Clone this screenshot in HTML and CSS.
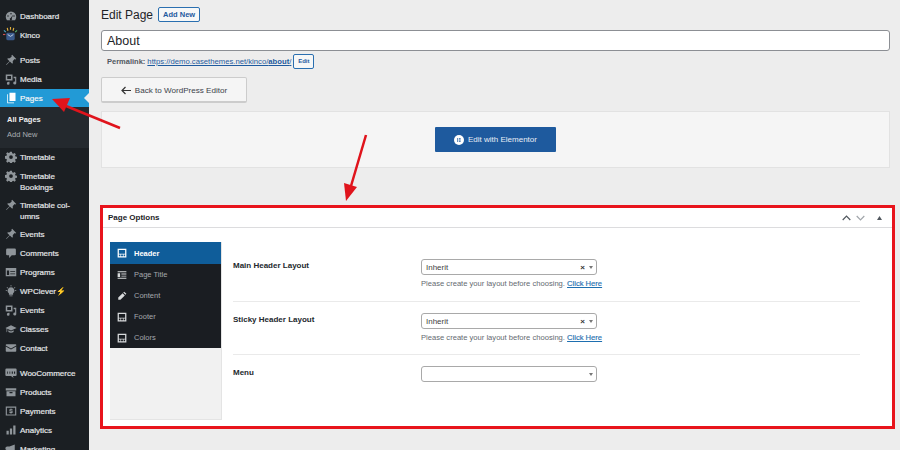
FILE: index.html
```html
<!DOCTYPE html>
<html lang="en">

<head>
    <meta charset="UTF-8">
    <title>Edit Page</title>
    <link rel="stylesheet" href="styles.css">
</head>

<body>
    <svg class="defs" width="0" height="0">
        <symbol id="i-dash" viewBox="0 0 16 16"><path d="M8 2a7 7 0 0 0-7 7c0 1.800.6 3.300 1.600 4.500h10.800A7 7 0 0 0 15 9a7 7 0 0 0-7-7zM8 4a1 1 0 1 1 0 2 1 1 0 0 1 0-2zM4 7a1 1 0 1 1 0 2 1 1 0 0 1 0-2zm8 0a1 1 0 1 1 0 2 1 1 0 0 1 0-2zM11 6l-2 5a1.500 1.500 0 1 1-1.500-.5z"/></symbol>
        <symbol id="i-pin" viewBox="0 0 16 16"><path d="M9.500 1l5.500 5.500-1.200.8-1-.5-2.600 2.700c.5 1.300.3 2.500-.5 3.500L6.500 10 2 14.500l-.5-.5L6 9.500 2.800 6.300c1-.8 2.200-1 3.500-.5L9 3.200l-.5-1z"/></symbol>
        <symbol id="i-media" viewBox="0 0 16 16"><path fill-rule="evenodd" d="M1 2h9v8H1zm2 2v4h5V4zM11.500 5H15v8.500a2 2 0 1 1-1.500-2V7h-2zM6 11.500v1.700A1.800 1.800 0 1 1 4.500 12v-.5z"/></symbol>
        <symbol id="i-pages" viewBox="0 0 16 16"><path d="M6 1h8v11H6zM4 3v11h8v1H3V3z"/></symbol>
        <symbol id="i-gear" viewBox="0 0 16 16"><path fill-rule="evenodd" d="M6.800 1h2.400l.4 2 1.500.6 1.700-1.100 1.700 1.700-1.100 1.700.6 1.500 2 .4v2.400l-2 .4-.6 1.500 1.100 1.700-1.700 1.700-1.700-1.100-1.500.6-.4 2H6.800l-.4-2-1.500-.6-1.700 1.100-1.700-1.700 1.100-1.700-.6-1.500-2-.4V6.800l2-.4.6-1.500-1.100-1.700 1.700-1.700 1.700 1.100 1.500-.6zM8 5.500a2.500 2.500 0 1 0 0 5 2.500 2.500 0 0 0 0-5z"/></symbol>
        <symbol id="i-comment" viewBox="0 0 16 16"><path d="M3 2h10a1.500 1.500 0 0 1 1.500 1.500v6A1.500 1.500 0 0 1 13 11H9l-3.500 3.500V11H3a1.500 1.500 0 0 1-1.500-1.500v-6A1.500 1.500 0 0 1 3 2z"/></symbol>
        <symbol id="i-programs" viewBox="0 0 16 16"><path fill-rule="evenodd" d="M1 2.500h14v11H1zM2.500 6v6h3V6zm4.500 1v1h6.500V7zm0 3v1h6.500v-1z"/></symbol>
        <symbol id="i-bulb" viewBox="0 0 16 16"><path d="M8 3a4.500 4.500 0 0 1 2.800 8v2H5.200v-2A4.500 4.500 0 0 1 8 3zM6 14h4v1H6zM7.500 0h1v2h-1zM1 7h2v1H1zm12 0h2v1h-2zM2.800 2.500l1.500 1.500-.7.700L2.100 3.200zm10.400 0l.7.700-1.500 1.500-.7-.7z"/></symbol>
        <symbol id="i-cap" viewBox="0 0 16 16"><path d="M8 3l7.500 3.500L8 10 3 7.700V11l-1 1.500V7.200L.5 6.500zM4.500 9.500L8 11.200l3.500-1.700V12c-2 1.300-5 1.300-7 0z"/></symbol>
        <symbol id="i-mail" viewBox="0 0 16 16"><path d="M2 3h12a1 1 0 0 1 1 1v.5L8 8.500 1 4.500V4a1 1 0 0 1 1-1zM1 6l7 4 7-4v6a1 1 0 0 1-1 1H2a1 1 0 0 1-1-1z"/></symbol>
        <symbol id="i-woo" viewBox="0 0 16 16"><path fill-rule="evenodd" d="M2 2h12a1.500 1.500 0 0 1 1.500 1.500v7A1.500 1.500 0 0 1 14 12h-3.500l1 2.500-3.500-2.500H2A1.500 1.500 0 0 1 .5 10.500v-7A1.500 1.500 0 0 1 2 2zm1 4v3h1V6zm3 0v3h1V6zm3 0v3h1.500V6zm3 0v3h1.500V6z"/></symbol>
        <symbol id="i-box" viewBox="0 0 16 16"><path fill-rule="evenodd" d="M1 3h14v3H1zM2 7h12v6.500H2zm4 1v1.500h4V8z"/></symbol>
        <symbol id="i-pay" viewBox="0 0 16 16"><path fill-rule="evenodd" d="M1 2h14v12H1zm1.500 1.500v9h11v-9zM7.400 4.500h1.200v1h1.500v1.200H7.300v.7h2.800v3.100H8.600v1H7.400v-1H5.900V9.300h2.800v-.7H5.900V5.500h1.500z"/></symbol>
        <symbol id="i-chart" viewBox="0 0 16 16"><path d="M2 9h3v5H2zm4.500-3h3v8h-3zM11 2h3v12h-3z"/></symbol>
        <symbol id="i-mega" viewBox="0 0 16 16"><path d="M13 2v10L6 9.500H3a2 2 0 0 1 0-5h3zM4 10.500h2l1 3.500H5z"/></symbol>
        <symbol id="i-layout" viewBox="0 0 16 16"><path fill-rule="evenodd" d="M1 1h14v14H1zM3 3v6h10V3zm0 7.500v2.500h2.500v-2.500zm3.500 0v2.500h3v-2.500zm4 0v2.500H13v-2.500z"/></symbol>
        <symbol id="i-title" viewBox="0 0 16 16"><path d="M1 2h14v1.500H1zM7 5.500h8V7H7zm0 3.500h8v1.500H7zM1 12.500h14V14H1zM1 5h4v6H1z"/></symbol>
        <symbol id="i-pencil" viewBox="0 0 16 16"><path d="M11.500 1l3.500 3.500-1.500 1.500L10 2.500zM9 3.500L12.500 7l-7 7H2v-3.500z"/></symbol>
    </svg>

    <div class="page">
        <nav class="sidebar">
            <a class="nav-item"><svg class="nav-icon"><use href="#i-dash"/></svg>Dashboard</a>
            <a class="nav-item">
                <svg class="nav-icon kinco-icon" viewBox="0 0 16 16">
                    <rect x="3.500" y="6" width="9" height="8" rx="1.500" fill="#3a5a8c"/>
                    <path d="M5 8l3 2 3-2" stroke="#c8d4e4" fill="none"/>
                    <path d="M8 0v3M4.500 1l.8 3M11.500 1l-.8 3" stroke="#e0b040" stroke-width="1.200"/>
                    <path d="M1 3.500l2 2" stroke="#4aa8c8" stroke-width="1.200"/>
                    <path d="M15 3.500l-2 2" stroke="#58b070" stroke-width="1.200"/>
                    <path d="M0 8h2.500" stroke="#d05050" stroke-width="1.200"/>
                </svg>Kinco
            </a>
            <div class="nav-gap"></div>
            <a class="nav-item"><svg class="nav-icon"><use href="#i-pin"/></svg>Posts</a>
            <a class="nav-item"><svg class="nav-icon"><use href="#i-media"/></svg>Media</a>
            <a class="nav-item active"><svg class="nav-icon"><use href="#i-pages"/></svg>Pages</a>
            <div class="submenu">
                <a class="sub-item current">All Pages</a>
                <a class="sub-item">Add New</a>
            </div>
            <a class="nav-item"><svg class="nav-icon"><use href="#i-gear"/></svg>Timetable</a>
            <a class="nav-item"><svg class="nav-icon"><use href="#i-gear"/></svg>Timetable Bookings</a>
            <a class="nav-item"><svg class="nav-icon"><use href="#i-pin"/></svg>Timetable col-umns</a>
            <a class="nav-item"><svg class="nav-icon"><use href="#i-pin"/></svg>Events</a>
            <a class="nav-item"><svg class="nav-icon"><use href="#i-comment"/></svg>Comments</a>
            <a class="nav-item"><svg class="nav-icon"><use href="#i-programs"/></svg>Programs</a>
            <a class="nav-item"><svg class="nav-icon"><use href="#i-bulb"/></svg>WPClever<span class="bolt">⚡</span></a>
            <a class="nav-item"><svg class="nav-icon"><use href="#i-media"/></svg>Events</a>
            <a class="nav-item"><svg class="nav-icon"><use href="#i-cap"/></svg>Classes</a>
            <a class="nav-item"><svg class="nav-icon"><use href="#i-mail"/></svg>Contact</a>
            <div class="nav-gap"></div>
            <a class="nav-item"><svg class="nav-icon"><use href="#i-woo"/></svg>WooCommerce</a>
            <a class="nav-item"><svg class="nav-icon"><use href="#i-box"/></svg>Products</a>
            <a class="nav-item"><svg class="nav-icon"><use href="#i-pay"/></svg>Payments</a>
            <a class="nav-item"><svg class="nav-icon"><use href="#i-chart"/></svg>Analytics</a>
            <a class="nav-item"><svg class="nav-icon"><use href="#i-mega"/></svg>Marketing</a>
        </nav>

        <main class="content">
            <div class="heading">
                <h1>Edit Page</h1>
                <a class="add-new">Add New</a>
            </div>
            <div class="title-input">About</div>
            <div class="permalink">
                <b>Permalink:</b>
                <a class="perma-link">https://demo.casethemes.net/kinco/<b>about</b>/</a>
                <span class="perma-edit">Edit</span>
            </div>
            <a class="back-btn"><span class="back-arrow">
                <svg width="10" height="9" viewBox="0 0 10 9"><path d="M4.500 1L1 4.500 4.500 8M1 4.500h9" fill="none" stroke="#333" stroke-width="1.200"/></svg>
            </span>Back to WordPress Editor</a>

            <div class="elementor-box">
                <a class="elementor-btn">
                    <svg width="10" height="10" viewBox="0 0 12 12"><circle cx="6" cy="6" r="6" fill="#fff"/><path d="M4 3.500h1v5H4zM6 3.500h2v1H6zm0 2h2v1H6zm0 2h2v1H6z" fill="#1e5a9e"/></svg>
                    Edit with Elementor
                </a>
            </div>

            <section class="metabox">
                <header class="metabox-head">
                    <h2>Page Options</h2>
                    <div class="metabox-tools">
                        <svg width="9" height="6" viewBox="0 0 9 6"><path d="M.7 5l3.800-3.800L8.300 5" fill="none" stroke="#50575e" stroke-width="1.200"/></svg>
                        <svg width="9" height="6" viewBox="0 0 9 6"><path d="M.7 1l3.800 3.800L8.300 1" fill="none" stroke="#a0a5aa" stroke-width="1.200"/></svg>
                        <svg class="tool-caret" width="5" height="4" viewBox="0 0 5 4"><path d="M2.500 0L5 4H0z" fill="#50575e"/></svg>
                    </div>
                </header>
                <div class="options">
                    <div class="tabs">
                        <ul class="tab-list">
                            <li class="tab on"><svg class="tab-icon"><use href="#i-layout"/></svg>Header</li>
                            <li class="tab"><svg class="tab-icon"><use href="#i-title"/></svg>Page Title</li>
                            <li class="tab"><svg class="tab-icon"><use href="#i-pencil"/></svg>Content</li>
                            <li class="tab"><svg class="tab-icon"><use href="#i-layout"/></svg>Footer</li>
                            <li class="tab"><svg class="tab-icon"><use href="#i-layout"/></svg>Colors</li>
                        </ul>
                    </div>
                    <div class="fields">
                        <div class="field">
                            <label>Main Header Layout</label>
                            <div class="control">
                                <div class="select"><span>Inherit</span><i class="clear">×</i><i class="caret"></i></div>
                                <p class="hint">Please create your layout before choosing. <a>Click Here</a></p>
                            </div>
                        </div>
                        <div class="field">
                            <label>Sticky Header Layout</label>
                            <div class="control">
                                <div class="select"><span>Inherit</span><i class="clear">×</i><i class="caret"></i></div>
                                <p class="hint">Please create your layout before choosing. <a>Click Here</a></p>
                            </div>
                        </div>
                        <div class="field">
                            <label>Menu</label>
                            <div class="control">
                                <div class="select"><span></span><i class="caret"></i></div>
                            </div>
                        </div>
                    </div>
                </div>
            </section>
        </main>
    </div>

    <!-- red annotation arrows -->
    <svg class="arrows" width="900" height="450" viewBox="0 0 900 450">
        <path d="M120 128L66 106" stroke="#e0141c" stroke-width="2.500"/>
        <path d="M52 99l18-1-6 14z" fill="#e0141c"/>
        <path d="M366 135L351 186" stroke="#e0141c" stroke-width="2.500"/>
        <path d="M346 201l-2-18 13 4z" fill="#e0141c"/>
    </svg>
</body>

</html>
```

FILE: styles.css
```css
* {
    margin: 0;
    padding: 0;
    box-sizing: border-box;
}

html,
body {
    width: 900px;
    height: 450px;
    overflow: hidden;
}

body {
    position: relative;
    background-color: #ededed;
    font-family: "Liberation Sans", Arial, sans-serif;
    color: #23282d;
}

a {
    text-decoration: none;
}

.defs {
    position: absolute;
}

.page {
    display: flex;
    height: 450px;
}

/* left admin menu */
.sidebar {
    width: 89px;
    height: 450px;
    flex-shrink: 0;
    overflow: hidden;
    padding-top: 7px;
    background-color: #1b1f23;
}

.nav-item {
    display: block;
    position: relative;
    min-height: 19px;
    padding: 4px 4px 3px 20px;
    font-size: 8px;
    line-height: 11px;
    color: #e4e6e8;
    -webkit-text-stroke: .2px #e4e6e8;
}

.nav-icon {
    position: absolute;
    left: 5px;
    top: 3px;
    width: 12px;
    height: 12px;
    fill: #8f959a;
}

.kinco-icon {
    left: 3px;
    top: 1px;
    width: 15px;
    height: 15px;
}

.nav-gap {
    height: 6px;
}

.nav-item.active {
    height: 18px;
    min-height: 18px;
    background-color: #229ad6;
    color: #fff;
}

.nav-item.active .nav-icon {
    fill: #fff;
}

.nav-item.active::after {
    content: "";
    position: absolute;
    right: 0;
    top: 4px;
    border: 5px solid transparent;
    border-right-color: #ededed;
    border-left: 0;
}

.submenu {
    padding: 5px 0 6px;
    background-color: #24292e;
}

.sub-item {
    display: block;
    padding-left: 7px;
    font-size: 7.500px;
    line-height: 15px;
    color: #a8adb2;
}

.sub-item.current {
    font-weight: bold;
    color: #f0f0f0;
}

.bolt {
    font-size: 8px;
    color: #f0a020;
    -webkit-text-stroke: 0;
}

/* main column */
.content {
    flex: 1;
    padding: 7px 4px 0 12px;
    min-width: 0;
}

.heading {
    display: flex;
    align-items: center;
    gap: 5px;
    height: 15px;
}

.heading h1 {
    font-size: 12px;
    font-weight: normal;
    color: #1d2327;
}

.add-new {
    height: 15px;
    padding: 0 4px;
    border: 1px solid #2a6fb0;
    border-radius: 2px;
    background-color: #f6f7f7;
    font-size: 7.500px;
    line-height: 13px;
    font-weight: bold;
    color: #1e5a9e;
}

.title-input {
    width: 789px;
    height: 21px;
    margin-top: 8px;
    padding: 1px 0 0 5px;
    border: 1px solid #8c8f94;
    border-radius: 3px;
    background-color: #fff;
    font-size: 12.500px;
    line-height: 19px;
    color: #1d2327;
}

.permalink {
    display: flex;
    align-items: center;
    height: 15px;
    margin: 3px 0 0 6px;
    gap: 2px;
    font-size: 7.500px;
    color: #50575e;
}

.perma-link {
    font-size: 7.700px;
    color: #1e5a9e;
    text-decoration: underline;
}

.perma-edit {
    width: 21px;
    height: 15px;
    border: 1px solid #2a6fb0;
    border-radius: 2px;
    background-color: #f6f7f7;
    font-size: 6px;
    line-height: 13px;
    font-weight: bold;
    text-align: center;
    color: #1e5a9e;
}

.back-btn {
    display: flex;
    align-items: center;
    justify-content: center;
    width: 146px;
    height: 26px;
    margin-top: 8px;
    padding-top: 1px;
    border: 1px solid #ccc;
    border-bottom-width: 2px;
    border-radius: 2px;
    background-color: #f5f5f5;
    font-size: 8.100px;
    color: #3c434a;
}

.back-arrow {
    display: flex;
    margin-right: 4px;
}

.elementor-box {
    display: flex;
    justify-content: center;
    width: 789px;
    height: 57px;
    margin-top: 8px;
    padding-top: 15px;
    border: 1px solid #e2e2e2;
    background-color: #f5f5f5;
}

.elementor-btn {
    display: flex;
    align-items: center;
    justify-content: center;
    gap: 4px;
    width: 121px;
    height: 25px;
    border-radius: 1px;
    background-color: #1e5a9e;
    font-size: 8px;
    color: #e8eef5;
}

/* page options box, with the red outline */
.metabox {
    width: 795px;
    height: 224px;
    margin: 37px 0 0 -1px;
    border: 3px solid #e8141c;
    background-color: #fff;
}

.metabox-head {
    display: flex;
    align-items: center;
    justify-content: space-between;
    height: 20px;
    padding: 0 10px 0 5px;
    border-bottom: 1px solid #dcdcde;
}

.metabox-head h2 {
    font-size: 8px;
    font-weight: bold;
    color: #1d2327;
}

.metabox-tools {
    display: flex;
    align-items: center;
    gap: 5px;
}

.tool-caret {
    margin-left: 7px;
}

.options {
    display: flex;
    padding: 14px 0 0 7px;
}

.tabs {
    width: 112px;
    height: 178px;
    flex-shrink: 0;
    border-right: 1px solid #e4e4e4;
    border-bottom: 1px solid #e4e4e4;
    background-color: #f1f1f1;
}

.tab-list {
    list-style: none;
    background-color: #1a1d22;
}

.tab {
    display: flex;
    align-items: center;
    height: 21px;
    padding-left: 7px;
    font-size: 7.500px;
    color: #a4a8ad;
}

.tab.on {
    height: 22px;
    background-color: #0f5d9a;
    font-weight: bold;
    color: #fff;
}

.tab-icon {
    width: 10px;
    height: 10px;
    margin-right: 7px;
    fill: #d8dadc;
}

.tab.on .tab-icon {
    fill: #fff;
}

.fields {
    width: 627px;
    margin-left: 11px;
}

.field {
    display: flex;
    height: 53px;
    padding-top: 11px;
    border-bottom: 1px solid #eaeaea;
}

.field:first-child {
    height: 60px;
    padding-top: 17px;
}

.field:last-child {
    border-bottom: 0;
}

.field label {
    width: 188px;
    flex-shrink: 0;
    padding-top: 1px;
    font-size: 8px;
    line-height: 11px;
    font-weight: bold;
    color: #23282d;
}

.control {
    width: 176px;
}

.select {
    display: flex;
    align-items: center;
    height: 16px;
    padding: 0 3px 0 4px;
    border: 1px solid #a9a9a9;
    border-radius: 3px;
    background-color: #fff;
    font-size: 8px;
    color: #444;
}

.select span {
    flex: 1;
}

.clear {
    margin-right: 4px;
    font-size: 8px;
    font-style: normal;
    font-weight: bold;
    color: #333;
}

.caret {
    border: 2px solid transparent;
    border-top: 3px solid #777;
    border-bottom: 0;
}

.hint {
    margin-top: 4px;
    white-space: nowrap;
    font-size: 7.600px;
    line-height: 10px;
    color: #646970;
}

.hint a {
    color: #1e6fb0;
    text-decoration: underline;
    -webkit-text-stroke: .15px #1e6fb0;
}

.arrows {
    position: absolute;
    left: 0;
    top: 0;
    pointer-events: none;
}
```
